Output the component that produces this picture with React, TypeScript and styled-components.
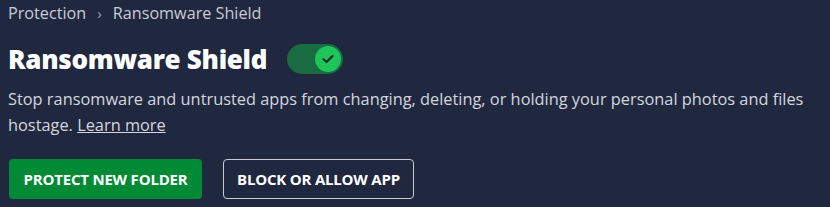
import React from "react";
import styled, { createGlobalStyle } from "styled-components";

const Global = createGlobalStyle`
  html, body { margin: 0; padding: 0; background: #202840; }
  body { font-family: "Open Sans", "Liberation Sans", sans-serif; }
`;

const Page = styled.div`
  width: 830px;
  height: 207px;
  box-sizing: border-box;
  padding: 0 8px;
  background: #202840;
  color: #fff;
  overflow: hidden;
`;

const Breadcrumb = styled.div`
  display: flex;
  align-items: center;
  gap: 11px;
  font-size: 16.2px;
  color: #c9ccd6;
  height: 26px;
  white-space: nowrap;
`;

const Sep = styled.span`
  color: #9aa0b0;
  font-size: 15px;
`;

const TitleRow = styled.div`
  display: flex;
  align-items: center;
  gap: 20px;
  margin-top: 18px;
  height: 30px;
`;

const Title = styled.h1`
  margin: 0;
  font-size: 26px;
  font-weight: 800;
  letter-spacing: -0.3px;
  color: #fff;
  white-space: nowrap;
`;

const Track = styled.div`
  width: 56px;
  height: 30px;
  border-radius: 15px;
  background: #1a6a42;
  display: flex;
  align-items: center;
  justify-content: flex-end;
  padding: 0 2px;
  box-sizing: border-box;
`;

const Knob = styled.div`
  width: 26px;
  height: 26px;
  border-radius: 50%;
  background: #1ec65a;
  display: flex;
  align-items: center;
  justify-content: center;
`;

const Desc = styled.p`
  margin: 12px 0 0 0;
  font-size: 16.35px;
  line-height: 26px;
  color: #d3d6de;
`;

const Link = styled.a`
  color: #d3d6de;
  text-decoration: underline;
`;

const Buttons = styled.div`
  display: flex;
  gap: 21px;
  margin-top: 21px;
  padding-left: 1px;
`;

const Button = styled.button<{ $primary?: boolean }>`
  height: 40px;
  box-sizing: border-box;
  padding: 0;
  border-radius: 4px;
  font-family: inherit;
  font-size: 15px;
  font-weight: 700;
  letter-spacing: -0.2px;
  color: #fff;
  white-space: nowrap;
  background: ${(p) => (p.$primary ? "#008a35" : "transparent")};
  border: ${(p) => (p.$primary ? "none" : "1px solid #c8cbd4")};
  width: ${(p) => (p.$primary ? "193px" : "191px")};
`;

export default function App() {
  return (
    <Page>
      <Global />
      <Breadcrumb>
        <span>Protection</span>
        <Sep>›</Sep>
        <span>Ransomware Shield</span>
      </Breadcrumb>
      <TitleRow>
        <Title>Ransomware Shield</Title>
        <Track>
          <Knob>
            <svg width="14" height="14" viewBox="0 0 14 14">
              <path d="M2.5 7.2 L5.6 10 L11.5 4" fill="none" stroke="#1b2a2a" strokeWidth="2.2" strokeLinecap="round" strokeLinejoin="round" />
            </svg>
          </Knob>
        </Track>
      </TitleRow>
      <Desc>
        Stop ransomware and untrusted apps from changing, deleting, or holding your personal photos and files hostage. <Link>Learn more</Link>
      </Desc>
      <Buttons>
        <Button $primary>PROTECT NEW FOLDER</Button>
        <Button>BLOCK OR ALLOW APP</Button>
      </Buttons>
    </Page>
  );
}
